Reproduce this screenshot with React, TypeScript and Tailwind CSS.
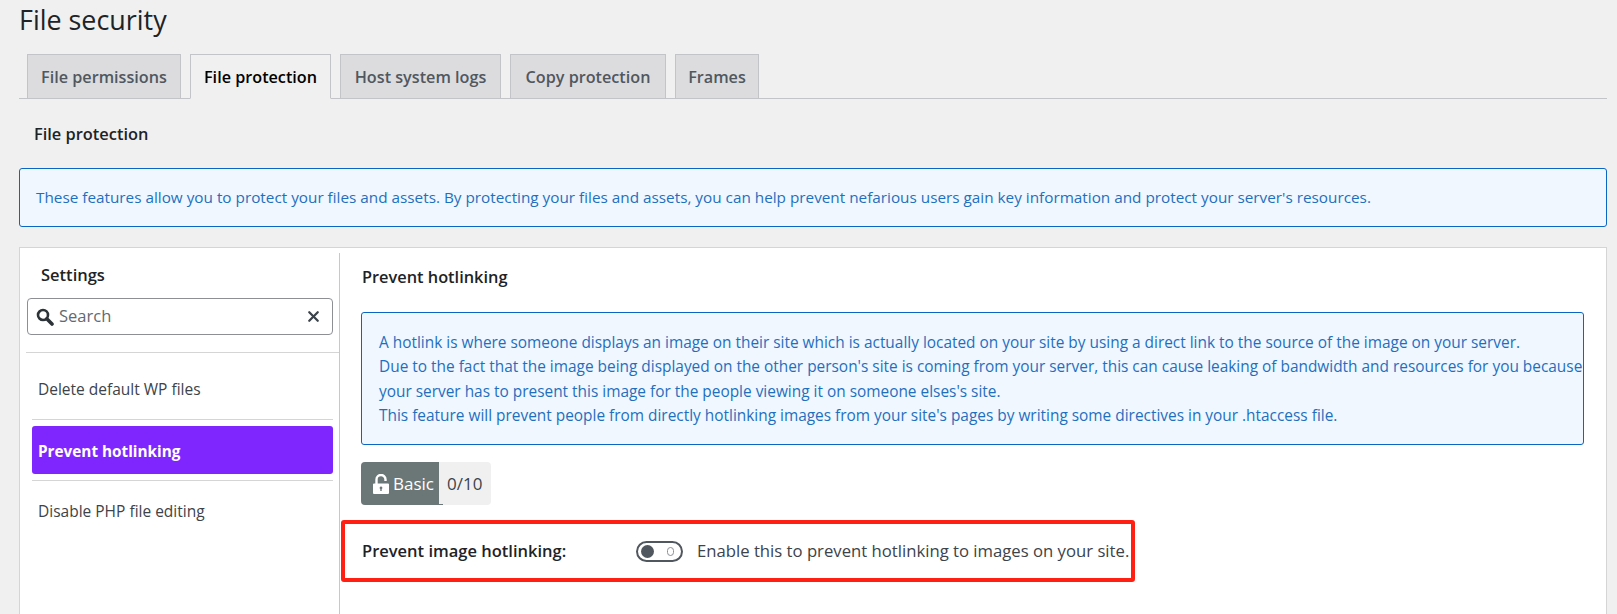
import React from 'react';
import { X } from 'lucide-react';

const tabs = [
  { label: 'File permissions', width: 'w-[154px]' },
  { label: 'File protection', width: 'w-[141px]', active: true },
  { label: 'Host system logs', width: 'w-[161px]' },
  { label: 'Copy protection', width: 'w-[156px]' },
  { label: 'Frames', width: 'w-[84px]' },
];

const App: React.FC = () => {
  return (
    <div className="h-[614px] overflow-hidden bg-[#f0f0f1] pl-[19px] pr-[10px] text-[#3c434a] font-['Open_Sans','Noto_Sans',sans-serif] text-[15.3px]">
      <h1 className="pt-[1px] h-[54px] text-[26.9px] leading-[38px] text-[#1d2327]">File security</h1>

      {/* Tabs */}
      <div className="flex h-[45px] gap-[9px] pl-[8px] border-b border-[#c3c4c7]">
        {tabs.map(tab => (
          <div
            key={tab.label}
            className={`${tab.width} h-[45px] flex items-center justify-center pt-[2px] border border-[#c3c4c7] text-[16.2px] font-semibold ${tab.active ? 'bg-[#f0f0f1] border-b-[#f0f0f1] text-black' : 'h-[44px] bg-[#dcdcde] text-[#50575e]'}`}
          >
            {tab.label}
          </div>
        ))}
      </div>

      <h2 className="h-[69px] pl-[15px] pt-[23px] text-[16.4px] leading-[24px] font-semibold text-[#1d2327]">File protection</h2>

      <div className="h-[59px] flex items-center pl-[16px] bg-[#f0f7fe] border border-[#0a66c2] rounded-[3px] text-[#1f6fbf] whitespace-nowrap">
        These features allow you to protect your files and assets. By protecting your files and assets, you can help prevent nefarious users gain key information and protect your server's resources.
      </div>

      {/* Panel */}
      <div className="mt-[20px] h-[400px] flex bg-white border border-[#d5d5d5]">
        {/* Sidebar */}
        <div className="w-[320px] mt-[5px] border-r border-[#c8c8c8] shrink-0">
          <div className="pl-[21px] pt-[10px] h-[45px] text-[16.5px] leading-[24px] font-semibold text-[#1d2327]">Settings</div>
          <div className="ml-[7px] w-[306px] h-[37px] flex items-center justify-between pl-[8px] pr-[10px] border border-[#8c8f94] rounded-[4px]">
            <div className="flex items-center gap-[5px]">
              <svg width="18" height="18" viewBox="0 0 18 18" fill="none" stroke="#2c3338">
                <circle cx="7" cy="7" r="5" strokeWidth="2.6" />
                <path d="M10.800 10.800L16 16" strokeWidth="3.600" strokeLinecap="round" />
              </svg>
              <span className="text-[16.5px] text-[#646970]">Search</span>
            </div>
            <X size={17} strokeWidth={3.2} className="text-[#3c434a]" />
          </div>
          <div className="mt-[17px] ml-[6px] border-t border-[#d5d5d5]" />
          <div className="h-[66px] pl-[18px] pt-[8px] flex items-center text-[15.5px]">Delete default WP files</div>
          <div className="ml-[12px] w-[301px] border-t border-[#d5d5d5]" />
          <div className="ml-[12px] mt-[6px] w-[301px] h-[48px] flex items-center pl-[6px] pt-[2px] bg-[#7f26ff] rounded-[3px] font-bold text-white">Prevent hotlinking</div>
          <div className="ml-[12px] mt-[6px] w-[301px] border-t border-[#d5d5d5]" />
          <div className="h-[62px] pl-[18px] flex items-center text-[15.5px]">Disable PHP file editing</div>
        </div>

        {/* Content */}
        <div className="flex-1 pl-[21px] pr-[22px]">
          <div className="h-[64px] pl-[1px] pt-[17px] text-[16.35px] leading-[24px] font-semibold text-[#1d2327]">Prevent hotlinking</div>
          <div className="h-[133px] flex items-center pl-[17px] pt-[2px] bg-[#f0f7fe] border border-[#0a66c2] rounded-[3px] text-[#1f6fbf] text-[15.42px] leading-[24.4px] whitespace-nowrap">
            <p>
              A hotlink is where someone displays an image on their site which is actually located on your site by using a direct link to the source of the image on your server.<br />
              Due to the fact that the image being displayed on the other person's site is coming from your server, this can cause leaking of bandwidth and resources for you because<br />
              your server has to present this image for the people viewing it on someone elses's site.<br />
              This feature will prevent people from directly hotlinking images from your site's pages by writing some directives in your .htaccess file.
            </p>
          </div>

          {/* Badge */}
          <div className="relative mt-[17px] w-[130px] h-[43px] flex rounded-[4px] bg-[#f0f0f1] text-[17px]">
            <div className="w-[78px] flex items-center pl-[12px] gap-[4px] bg-[#6b7677] rounded-l-[4px] text-white">
              <svg width="16" height="20" viewBox="0 0 16 20" fill="none" className="shrink-0">
                <path d="M3.500 10V5.500a4.500 4.500 0 0 1 9 0V7" stroke="#fff" strokeWidth="2.400" />
                <path fillRule="evenodd" fill="#fff" d="M1 9.500h14a1 1 0 0 1 1 1V19a1 1 0 0 1-1 1H1a1 1 0 0 1-1-1v-8.500a1 1 0 0 1 1-1zM8 12.500a1.400 1.400 0 0 0-.7 2.600V17h1.400v-1.900A1.400 1.400 0 0 0 8 12.500z" />
              </svg>
              <span>Basic</span>
            </div>
            <div className="flex-1 flex items-center pl-[8px]">0/10</div>
            <span className="absolute left-[78px] bottom-0 w-[4px] h-[1px] bg-[#6b7677]" />
          </div>

          {/* Highlighted setting */}
          <div className="-ml-[20px] mt-[15px] w-[794px] h-[62px] flex items-center pl-[17px] border-[4px] border-[#ff1f13] rounded-[3px]">
            <div className="w-[274px] text-[16.5px] font-semibold text-[#1d2327]">Prevent image hotlinking:</div>
            <div className="relative w-[47px] h-[21px] rounded-full border-[2px] border-[#50575e] bg-white shrink-0">
              <span className="absolute left-[3px] top-[2px] w-[13px] h-[13px] rounded-full bg-[#50575e]" />
              <span className="absolute right-[7px] top-[4px] w-[7px] h-[9px] rounded-full border border-[#8c8f94]" />
            </div>
            <div className="ml-[14px] text-[16.7px] whitespace-nowrap">Enable this to prevent hotlinking to images on your site.</div>
          </div>
        </div>
      </div>
    </div>
  );
};

export default App;
